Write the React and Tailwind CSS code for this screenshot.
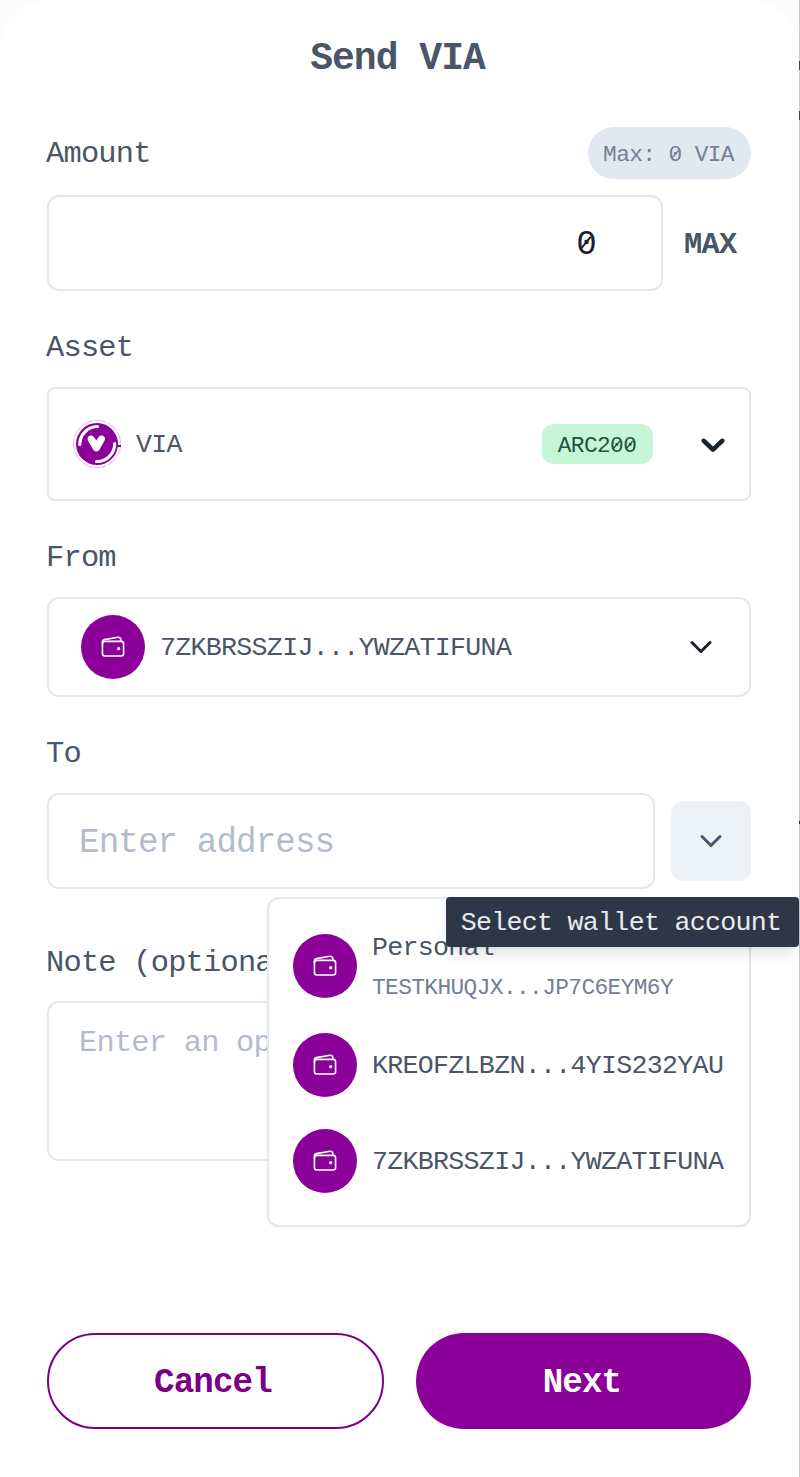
import React from "react";
import { IoChevronDown, IoWalletOutline } from "react-icons/io5";

function Label({ children }) {
  return <div className="-ml-px flex h-12 items-center pt-[3px] text-[30.4px] leading-none">{children}</div>;
}

function SlashedZero() {
  return (
    <span className="relative inline-block">
      0
      <svg className="absolute left-0 top-0 h-full w-full" viewBox="0 0 60 100" fill="none" stroke="currentColor">
        <path d="M14 62L45 25" strokeWidth="6" />
      </svg>
    </span>
  );
}

function Avatar() {
  return (
    <span className="flex size-16 shrink-0 items-center justify-center rounded-full bg-[#8b0099] text-white">
      <IoWalletOutline size={26} />
    </span>
  );
}

function ViaLogo() {
  return (
    <svg className="size-12 shrink-0" viewBox="0 0 48 48" fill="none">
      <circle cx="24" cy="24" r="23.6" stroke="#8b0099" strokeOpacity=".4" strokeWidth=".7" strokeDasharray="12 1.5" />
      <circle cx="24" cy="24" r="21" fill="#8b0099" />
      <path d="M44 26h4" stroke="#8b0099" strokeWidth="2" />
      <path d="M6.8 24.5A17.8 17.8 0 0 1 24.5 6.5M41.7 23.5A17.8 17.8 0 0 1 23.5 41.5" stroke="#fff" strokeWidth="3.2" strokeLinecap="round" />
      <path d="M15 20.5c-2-4 3.500-7 6.200-3L23.300 20.200l2.100-2.700c2.700-4 8.200-1 6.200 3l-5 9c-1.500 2.600-5 2.600-6.500 0z" fill="#fff" />
    </svg>
  );
}

function ThickChevron() {
  return (
    <svg className="size-10" viewBox="0 0 20 20" fill="#1a202c">
      <path d="M4.516 7.548c0.436-0.446 1.043-0.481 1.576 0l3.908 3.747 3.908-3.747c0.533-0.481 1.141-0.446 1.574 0 0.436 0.445 0.408 1.197 0 1.615-0.406 0.418-4.695 4.502-4.695 4.502-0.217 0.223-0.502 0.335-0.787 0.335s-0.57-0.112-0.789-0.335c0 0-4.287-4.084-4.695-4.502s-0.436-1.17 0-1.615z" />
    </svg>
  );
}

function AccountMenu() {
  return (
    <div className="absolute left-[220px] top-[104px] z-10 h-[330px] w-[484px] rounded-xl border-2 border-[#e2e8f0] bg-white pl-6 pt-7 text-[26.6px] leading-none shadow-xs">
      <div className="flex h-[78px] items-center gap-[15px]">
        <Avatar />
        <div className="flex flex-col gap-[15px] pt-[3px]">
          <div>Personal</div>
          <div className="text-[22.8px] leading-none text-[#718096]">TESTKHUQJX...JP7C6EYM6Y</div>
        </div>
      </div>
      <div className="mt-3 flex h-24 items-center gap-[15px]">
        <Avatar />
        <span className="pt-[3px]">KREOFZLBZN...4YIS232YAU</span>
      </div>
      <div className="flex h-24 items-center gap-[15px]">
        <Avatar />
        <span className="pt-[3px]">7ZKBRSSZIJ...YWZATIFUNA</span>
      </div>
    </div>
  );
}

export default function App() {
  return (
    <div className="flex h-[1477px] w-[800px] overflow-hidden bg-[#fcfcfc] font-['Liberation_Mono',monospace] text-[#4a5568] **:tracking-[-0.026em]">
      <main className="flex w-[799px] shrink-0 flex-col rounded-t-[48px] bg-white px-[47px]">
        <h1 className="flex h-[111px] items-center justify-center pr-1 pt-[6px] text-[38px] font-bold leading-none">Send VIA</h1>

        <div className="mt-4 flex h-[52px] w-[704px] items-center justify-between">
          <Label>Amount</Label>
          <span className="flex h-[52px] w-[163px] items-center justify-center whitespace-pre rounded-full bg-[#e2e8f0] pr-[2px] pt-1 text-[22.8px] leading-none text-[#718096]">
            <span>Max: <SlashedZero /> VIA</span>
          </span>
        </div>
        <div className="mt-4 flex h-24 w-[704px] items-center">
          <div className="flex h-24 w-[616px] items-center justify-end rounded-xl border-2 border-[#e2e8f0] pr-[65px] pt-1 text-[34.2px] leading-none text-[#1a202c]"><SlashedZero /></div>
          <span className="ml-[21px] pt-1 text-[30.4px] font-bold leading-none">MAX</span>
        </div>

        <div className="mt-8"><Label>Asset</Label></div>
        <div className="mt-4 flex h-[114px] w-[704px] items-center rounded-lg border-2 border-[#e2e8f0] pl-6 pr-4">
          <ViaLogo />
          <span className="ml-[15px] pt-[3px] text-[26.6px] leading-none">VIA</span>
          <span className="ml-auto mr-10 flex h-10 w-[111px] items-center justify-center rounded-xl bg-[#c6f6d5] pr-px pt-1 text-[22.8px] leading-none text-[#22543d]">
            <span>ARC2<SlashedZero /><SlashedZero /></span>
          </span>
          <ThickChevron />
        </div>

        <div className="mt-8"><Label>From</Label></div>
        <div className="mt-4 flex h-[100px] w-[704px] items-center rounded-xl border-2 border-[#e2e8f0] pl-8 pr-8">
          <Avatar />
          <span className="ml-[15px] pt-[3px] text-[26.6px] leading-none">7ZKBRSSZIJ...YWZATIFUNA</span>
          <IoChevronDown className="ml-auto text-[#1a202c]" size={32} />
        </div>

        <div className="mt-8"><Label>To</Label></div>
        <div className="relative mt-4 flex h-24 w-[704px] items-center gap-4">
          <div className="flex h-24 w-[608px] items-center rounded-xl border-2 border-[#e2e8f0] pl-[30px] pt-[5px] text-[34.2px] leading-none text-[#b2bccb]">Enter address</div>
          <button className="flex size-20 items-center justify-center rounded-xl bg-[#edf2f7]">
            <IoChevronDown size={32} />
          </button>
          <AccountMenu />
          <div className="absolute left-[399px] top-[104px] z-20 flex h-[50px] w-[353px] items-center justify-center whitespace-nowrap rounded bg-[#2d3748] pr-[3px] pt-[3px] text-[26.6px] leading-none text-white/90 shadow-lg">Select wallet account</div>
        </div>

        <div className="mt-[49px]"><Label>Note (optional)</Label></div>
        <div className="mt-[15px] h-40 w-[704px] rounded-xl border-2 border-[#e2e8f0] pl-[30px] pt-[25px] text-[30.4px] leading-none text-[#b2bccb]">
          <div className="h-10 w-[191px] overflow-hidden whitespace-nowrap">Enter an optional note</div>
        </div>

        <div className="mt-[172px] flex h-24 w-[704px] gap-8 text-[34.2px] font-bold">
          <button className="w-[337px] rounded-full border-2 border-[#7b0086] pr-[5px] pt-[5px] text-[#7b0086]">Cancel</button>
          <button className="w-[335px] rounded-full bg-[#8b0099] pr-[3px] pt-[5px] text-white">Next</button>
        </div>
      </main>
      <div className="flex w-px shrink-0 flex-col bg-[#c7c8c9]">
        <div className="mt-[61px] h-[9px] bg-[#3e4450]" />
        <div className="mt-[41px] h-[9px] bg-[#3e4450]" />
        <div className="mt-[701px] h-[3px] bg-[#2d3035]" />
      </div>
    </div>
  );
}
